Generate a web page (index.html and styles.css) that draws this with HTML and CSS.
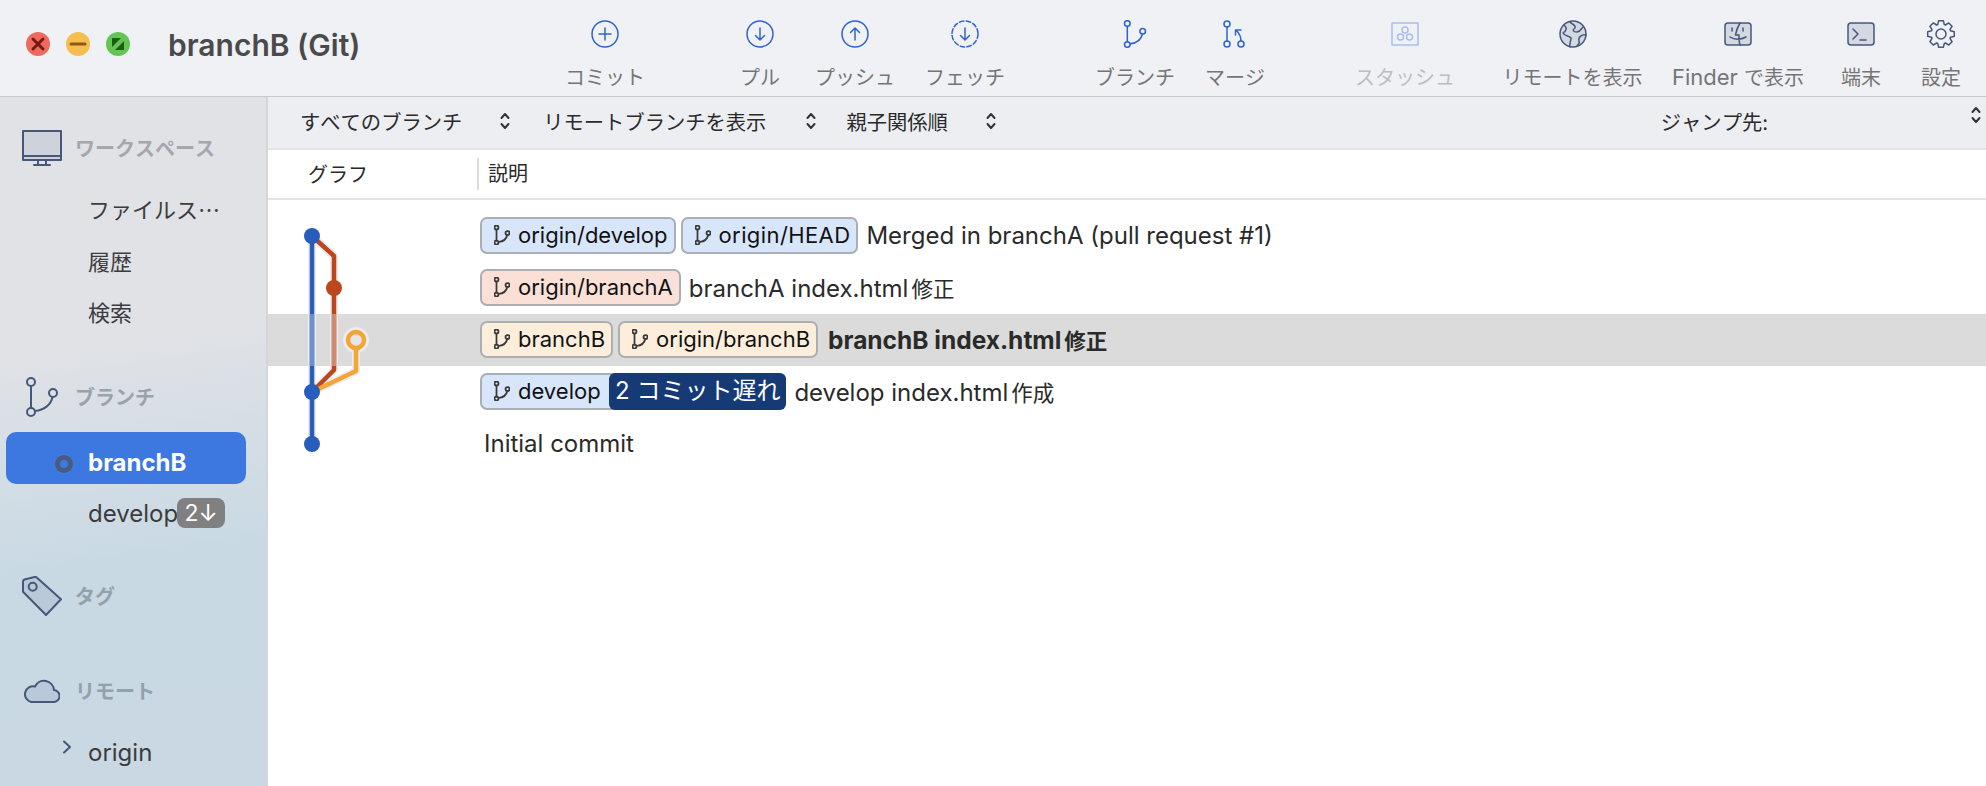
FILE: index.html
```html
<!DOCTYPE html>
<html lang="ja">
<head>
    <meta charset="UTF-8">
    <title>branchB (Git)</title>
    <link rel="stylesheet" href="styles.css">
</head>
<body>
    <svg class="defs" width="0" height="0">
        <symbol id="branch" viewBox="0 0 32 40">
            <circle cx="5" cy="5" r="4"/>
            <circle cx="5" cy="35" r="4"/>
            <circle cx="27" cy="16" r="4"/>
            <path d="M5 9V31M9 34C18 33 25 28 26.5 20"/>
        </symbol>
        <symbol id="updown" viewBox="0 0 10 18">
            <path d="M1.5 6L5 2L8.5 6M1.5 12L5 16L8.5 12"/>
        </symbol>
    </svg>

    <header class="titlebar">
        <div class="lights">
            <span class="light light-red"><svg viewBox="0 0 24 24"><path d="M7 7L17 17M17 7L7 17"/></svg></span>
            <span class="light light-yellow"><svg viewBox="0 0 24 24"><path d="M5 12H19"/></svg></span>
            <span class="light light-green"><svg viewBox="0 0 24 24"><path class="fill" d="M6 18V9L15 18ZM18 6V15L9 6Z" transform="rotate(90 12 12)"/></svg></span>
        </div>
        <h1 class="title">branchB (Git)</h1>
        <nav class="toolbar">
            <div class="tool tool-commit">
                <svg class="tool-icon" viewBox="0 0 28 28"><circle cx="14" cy="14" r="13"/><path d="M14 8V20M8 14H20"/></svg>
                <span>コミット</span>
            </div>
            <div class="tool tool-pull">
                <svg class="tool-icon" viewBox="0 0 28 28"><circle cx="14" cy="14" r="13"/><path d="M14 8V20M9.5 15.5L14 20L18.5 15.5"/></svg>
                <span>プル</span>
            </div>
            <div class="tool tool-push">
                <svg class="tool-icon" viewBox="0 0 28 28"><circle cx="14" cy="14" r="13"/><path d="M14 20V8M9.5 12.5L14 8L18.5 12.5"/></svg>
                <span>プッシュ</span>
            </div>
            <div class="tool tool-fetch">
                <svg class="tool-icon" viewBox="0 0 28 28"><circle cx="14" cy="14" r="13" stroke-dasharray="4.5 2.4"/><path d="M14 8V20M9.5 15.5L14 20L18.5 15.5"/></svg>
                <span>フェッチ</span>
            </div>
            <div class="tool tool-branch">
                <svg class="tool-icon"><use href="#branch"/></svg>
                <span>ブランチ</span>
            </div>
            <div class="tool tool-merge">
                <svg class="tool-icon" viewBox="0 0 28 28">
                    <circle cx="6" cy="4" r="3"/><circle cx="6" cy="24" r="3"/><circle cx="20" cy="24" r="3"/>
                    <path d="M6 7V21M20 21C20 17 18 13 15 10M14.500 15V10H20"/>
                </svg>
                <span>マージ</span>
            </div>
            <div class="tool tool-stash is-disabled">
                <svg class="tool-icon" viewBox="0 0 28 28">
                    <rect x="1" y="3" width="26" height="22"/>
                    <circle cx="14" cy="10" r="3"/><circle cx="9.500" cy="17" r="3"/><circle cx="18.500" cy="17" r="3"/>
                </svg>
                <span>スタッシュ</span>
            </div>
            <div class="tool tool-remote">
                <svg class="tool-icon icon-dark" viewBox="0 0 28 28">
                    <circle class="tint" cx="14" cy="14" r="13"/>
                    <path d="M5 5C9 8 7 11 4 13C6 17 10 15 12 18C12 21 10 24 11 27M11 2C13 5 17 4 16 8C13 10 14 12 18 12C22 11 22 9 24 7M27 15C23 14 19 17 20 21C21 23 19 25 18 26"/>
                </svg>
                <span>リモートを表示</span>
            </div>
            <div class="tool tool-finder">
                <svg class="tool-icon icon-dark" viewBox="0 0 28 28">
                    <rect class="tint" x="1" y="3" width="26" height="22" rx="3"/>
                    <path d="M16 3C13 8 12 12 11.500 15H15C15 18 15 22 16 25M8 8V11M19 8V11M6 17C10 20 17 20 22 17"/>
                </svg>
                <span><span class="latin">Finder </span>で表示</span>
            </div>
            <div class="tool tool-term">
                <svg class="tool-icon icon-dark" viewBox="0 0 28 28">
                    <rect class="tint" x="1" y="3" width="26" height="22" rx="3"/>
                    <path d="M6 9L11 14L6 19M13 20H19"/>
                </svg>
                <span>端末</span>
            </div>
            <div class="tool tool-settings">
                <svg class="tool-icon icon-dark" viewBox="0 0 28 28">
                    <path d="M10.74 4.54L11.66 .7H16.34L17.26 4.54L18.38 5.01L21.74 2.94L25.06 6.26L22.99 9.62L23.46 10.74L27.3 11.66V16.34L23.46 17.26L22.99 18.38L25.06 21.74L21.74 25.06L18.38 22.99L17.26 23.46L16.34 27.3H11.66L10.74 23.46L9.62 22.99L6.26 25.06L2.94 21.74L5.01 18.38L4.54 17.26L.7 16.34V11.66L4.54 10.74L5.01 9.62L2.94 6.26L6.26 2.94L9.62 5.01Z"/>
                    <circle cx="14" cy="14" r="5"/>
                </svg>
                <span>設定</span>
            </div>
        </nav>
    </header>

    <div class="content">
        <aside class="sidebar">
            <div class="side-head head-workspace">
                <svg class="side-icon icon-monitor" viewBox="0 0 40 36">
                    <rect class="tint" x="1" y="1" width="38" height="29"/>
                    <path d="M1 26H39M16 30V35M24 30V35M12 35H28"/>
                </svg>
                <span>ワークスペース</span>
            </div>
            <div class="side-item item-first"><span class="ja ja-side">ファイルス…</span></div>
            <div class="side-item item-compact"><span class="ja ja-side">履歴</span></div>
            <div class="side-item"><span class="ja ja-side">検索</span></div>

            <div class="side-head head-branch">
                <svg class="side-icon icon-branch"><use href="#branch"/></svg>
                <span>ブランチ</span>
            </div>
            <div class="side-item is-selected">
                <span class="current-ring"></span>
                <span>branchB</span>
            </div>
            <div class="side-item item-develop">
                <span>develop</span>
                <span class="count">2↓</span>
            </div>

            <div class="side-head head-tag">
                <svg class="side-icon icon-tag" viewBox="0 0 40 40">
                    <path class="tint" d="M1 15.700V5.500Q1 4 2.500 3.500L12.500 1Q14 .7 15 1.700L39 23.300L24 39Z"/>
                    <circle cx="10.700" cy="10.700" r="4"/>
                </svg>
                <span>タグ</span>
            </div>

            <div class="side-head head-remote">
                <svg class="side-icon icon-cloud" viewBox="0 0 36 24">
                    <path class="tint" d="M7 23H29A6 6 0 0 0 30 11A10 10 0 0 0 11 7.500A8 8 0 0 0 7 23Z"/>
                </svg>
                <span>リモート</span>
            </div>
            <div class="side-item item-origin">
                <svg class="disclosure" viewBox="0 0 10 14"><path d="M2 1.500L8 7L2 12.500"/></svg>
                <span>origin</span>
            </div>
        </aside>

        <main class="main">
            <div class="filterbar">
                <div class="filter filter-branches">すべてのブランチ<svg class="updown"><use href="#updown"/></svg></div>
                <div class="filter filter-remote">リモートブランチを表示<svg class="updown"><use href="#updown"/></svg></div>
                <div class="filter filter-order">親子関係順<svg class="updown"><use href="#updown"/></svg></div>
                <div class="filter filter-jump">ジャンプ先:<svg class="updown"><use href="#updown"/></svg></div>
            </div>

            <div class="columns">
                <div class="col-graph">グラフ</div>
                <div class="col-desc">説明</div>
            </div>

            <div class="rows">
                <div class="row">
                    <span class="ref ref-blue"><svg class="ref-icon"><use href="#branch"/></svg>origin/develop</span>
                    <span class="ref ref-blue ref-head"><svg class="ref-icon"><use href="#branch"/></svg>origin/HEAD</span>
                    <span class="msg">Merged in branchA (pull request #1)</span>
                </div>
                <div class="row">
                    <span class="ref ref-red"><svg class="ref-icon"><use href="#branch"/></svg>origin/branchA</span>
                    <span class="msg">branchA index.html<span class="ja ja-gap">修正</span></span>
                </div>
                <div class="row is-current">
                    <span class="ref ref-orange"><svg class="ref-icon"><use href="#branch"/></svg>branchB</span>
                    <span class="ref ref-orange"><svg class="ref-icon"><use href="#branch"/></svg>origin/branchB</span>
                    <span class="msg">branchB index.html<span class="ja ja-gap">修正</span></span>
                </div>
                <div class="row">
                    <span class="ref ref-blue ref-joined"><svg class="ref-icon"><use href="#branch"/></svg>develop</span>
                    <span class="behind">2 コミット遅れ</span>
                    <span class="msg">develop index.html<span class="ja ja-gap">作成</span></span>
                </div>
                <div class="row">
                    <span class="msg msg-plain">Initial commit</span>
                </div>

                <svg class="graph" viewBox="0 0 140 260">
                    <g class="halo">
                        <path d="M44 26V234"/>
                        <path d="M44 26L66 46V160L44 182"/>
                        <path d="M88 130V161L44 182"/>
                        <circle cx="88" cy="130" r="9"/>
                    </g>
                    <path class="line line-red" d="M44 26L66 46V160L44 182"/>
                    <path class="line line-blue" d="M44 26V234"/>
                    <path class="line line-orange" d="M88 130V161L44 182"/>
                    <path class="line line-blue-soft" d="M44 104V156"/>
                    <path class="line line-red-soft" d="M66 104V156"/>
                    <circle class="node-blue" cx="44" cy="26" r="8"/>
                    <circle class="node-red" cx="66" cy="78" r="8"/>
                    <circle class="node-ring" cx="88" cy="130" r="8"/>
                    <circle class="node-blue" cx="44" cy="182" r="8"/>
                    <circle class="node-blue" cx="44" cy="234" r="8"/>
                </svg>
            </div>
        </main>
    </div>
</body>
</html>
```

FILE: styles.css
```css
* {
    box-sizing: border-box;
}
html, body {
    height: 786px;
    margin: 0;
    overflow: hidden;
}
body {
    font-family: "Inter", "Noto Sans CJK JP", sans-serif;
    font-size: 24px;
    color: #2a2a2a;
    background: #ffffff;
}
.defs {
    display: block;
    height: 0;
}
svg {
    display: block;
    fill: none;
    stroke-linecap: round;
    stroke-linejoin: round;
}
.ja {
    font-family: "Noto Sans CJK JP", sans-serif;
    font-size: 21.500px;
    font-kerning: none;
}
.ja-gap {
    margin-left: 3px;
}
.ja-side {
    font-size: 22px;
}

/* title bar */
.titlebar {
    display: flex;
    height: 97px;
    background: #f0f1f5;
    border-bottom: 1px solid #c9c9cb;
}
.lights {
    display: flex;
    gap: 16px;
    margin: 32px 0 0 26px;
}
.light {
    width: 24px;
    height: 24px;
    border-radius: 50%;
}
.light svg {
    stroke-width: 3;
}
.light-red {
    background: #ec6a5e;
    stroke: #7a1810;
}
.light-yellow {
    background: #f4bf4f;
    stroke: #8f5a16;
}
.light-green {
    background: #62c554;
}
.light-green .fill {
    fill: #1f5c14;
}
.title {
    width: 392px;
    margin: 27px 0 0 38px;
    font-size: 30px;
    line-height: 36px;
    font-weight: 600;
    color: #4a4a4d;
}
.toolbar {
    display: flex;
}
.tool {
    display: flex;
    flex-direction: column;
    align-items: center;
    padding-top: 20px;
    font-size: 20px;
    font-kerning: none;
    line-height: 24px;
    color: #757577;
    white-space: nowrap;
}
.latin {
    font-size: 22px;
    line-height: 0;
}
.tool-icon {
    width: 28px;
    height: 28px;
    margin-bottom: 18px;
    stroke: #2f63d0;
    stroke-width: 1.500;
}
.tool-branch .tool-icon {
    stroke-width: 2.200;
}
.icon-dark {
    stroke: #46587a;
}
.icon-dark .tint {
    fill: #d3d8e2;
}
.is-disabled {
    color: #bcbdc1;
}
.is-disabled .tool-icon {
    stroke: #a9bdee;
}
.tool-commit { width: 90px; }
.tool-pull { width: 70px; margin-left: 75px; }
.tool-push { width: 80px; margin-left: 20px; }
.tool-fetch { width: 80px; margin-left: 30px; }
.tool-branch { width: 80px; margin-left: 90px; }
.tool-merge { width: 70px; margin-left: 25px; }
.tool-stash { width: 110px; margin-left: 80px; }
.tool-remote { width: 155px; margin-left: 35px; }
.tool-finder { width: 150px; margin-left: 13px; }
.tool-term { width: 52px; margin-left: 22px; }
.tool-settings { width: 52px; margin-left: 28px; }

/* sidebar */
.content {
    display: flex;
    height: 689px;
}
.sidebar {
    flex: 0 0 268px;
    padding-top: 25px;
    background: linear-gradient(172deg, #e1e2e6 0, #e0e2e6 36%, #c9d9e4 66%, #c9d8e3 100%);
    border-right: 2px solid #d6d6d6;
}
.side-head {
    display: flex;
    align-items: center;
    height: 52px;
    padding: 0 0 2px 75px;
    position: relative;
    font-size: 20px;
    font-kerning: none;
    font-weight: 700;
    color: #a4a7ac;
}
.side-icon {
    position: absolute;
    left: 22px;
    stroke: #46587a;
    stroke-width: 2;
}
.side-icon .tint {
    fill: #b9c9da;
}
.icon-monitor {
    top: 8px;
    width: 40px;
    height: 36px;
}
.icon-monitor .tint {
    fill: #ced2da;
}
.icon-branch {
    left: 26px;
    top: 6px;
    width: 32px;
    height: 40px;
}
.icon-tag {
    top: 6px;
    width: 40px;
    height: 40px;
}
.icon-cloud {
    left: 24px;
    top: 14px;
    width: 36px;
    height: 24px;
}
.side-item {
    display: flex;
    align-items: center;
    height: 52px;
    padding-left: 88px;
    color: #3c3c3e;
}
.item-first {
    margin-top: 8px;
}
.item-compact {
    height: 51px;
}
.head-branch {
    margin-top: 34px;
    color: #9aa3ab;
}
.is-selected {
    position: relative;
    width: 240px;
    margin: 9px 0 0 6px;
    padding: 9px 0 0 82px;
    border-radius: 10px;
    background: #3d77e0;
    font-weight: 700;
    color: #ffffff;
}
.current-ring {
    position: absolute;
    left: 49px;
    top: 23px;
    width: 18px;
    height: 18px;
    border: 5px solid #4a5c7e;
    border-radius: 50%;
}
.item-develop {
    margin-top: 3px;
}
.count {
    width: 48px;
    height: 30px;
    margin-left: -1px;
    border-radius: 8px;
    background: #808080;
    color: #ffffff;
    font-size: 23px;
    line-height: 30px;
    text-align: center;
}
.head-tag {
    margin-top: 31px;
    color: #93a1ac;
}
.head-remote {
    margin-top: 43px;
    color: #93a1ac;
}
.item-origin {
    position: relative;
    margin-top: 9px;
}
.disclosure {
    position: absolute;
    left: 62px;
    top: 14px;
    width: 10px;
    height: 14px;
    stroke: #46587a;
    stroke-width: 2;
}

/* main list */
.main {
    flex: 1;
    min-width: 0;
}
.filterbar {
    display: flex;
    align-items: center;
    height: 53px;
    padding: 0 0 4px 32px;
    background: #edeef2;
    border-bottom: 2px solid #e4e4e6;
    font-size: 20.300px;
    font-kerning: none;
    white-space: nowrap;
}
.filter {
    display: flex;
    align-items: center;
}
.updown {
    width: 10px;
    height: 18px;
    stroke: #333333;
    stroke-width: 2;
}
.filter-branches .updown { margin-left: 38px; }
.filter-remote { margin-left: 33px; }
.filter-remote .updown { margin-left: 40px; }
.filter-order { margin-left: 30px; }
.filter-order .updown { margin-left: 38px; }
.filter-jump { margin-left: 665px; }
.filter-jump .updown {
    margin: -12px 0 0 203px;
}
.columns {
    display: flex;
    align-items: center;
    height: 50px;
    border-bottom: 2px solid #e4e4e4;
    font-size: 20px;
    font-kerning: none;
}
.col-graph {
    width: 209px;
    padding: 0 0 2px 40px;
}
.col-desc {
    height: 32px;
    padding-left: 9px;
    border-left: 2px solid #dcdcdc;
    line-height: 32px;
}
.rows {
    position: relative;
    padding-top: 10px;
}
.row {
    display: flex;
    align-items: center;
    gap: 5px;
    height: 52px;
    padding-left: 212px;
    white-space: nowrap;
}
.is-current {
    background: #dbdbdb;
}
.is-current .msg {
    margin-left: 5px;
    font-size: 24.500px;
    font-weight: 700;
}
.ref {
    display: flex;
    align-items: center;
    height: 37px;
    margin-bottom: 2px;
    padding: 0 6px 0 12px;
    border: 2px solid #abaeb2;
    border-radius: 7px;
    color: #111111;
    font-size: 22px;
}
.ref-head {
    letter-spacing: .4px;
}
.ref-blue { background: #d8e6fb; }
.ref-red { background: #fbe0d8; }
.ref-orange { background: #fdeedb; }
.ref-joined {
    padding-right: 0;
    width: 140px;
    border-radius: 7px 0 0 7px;
    border-right: 0;
}
.ref-icon {
    width: 16px;
    height: 20px;
    margin-right: 8px;
    stroke: #3a3a3a;
    stroke-width: 3.500;
}
.behind {
    height: 37px;
    margin: 0 0 2px -16px;
    padding: 0 6px;
    border-radius: 6px;
    background: #163a75;
    color: #ffffff;
    font-size: 24px;
    font-kerning: none;
    line-height: 36px;
}
.msg {
    margin: 0 0 2px 3px;
}
.msg-plain {
    margin-left: 4px;
}
.graph {
    position: absolute;
    left: 0;
    top: 10px;
    width: 140px;
    height: 260px;
    pointer-events: none;
}
.halo {
    stroke: #ececec;
    stroke-width: 8;
}
.halo circle {
    fill: #ececec;
}
.line {
    stroke-width: 4.500;
    stroke-linecap: butt;
}
.line-blue { stroke: #295dbb; }
.line-red { stroke: #bd471c; }
.line-orange { stroke: #f3a537; }
.line-blue-soft { stroke: #6c90cd; }
.line-red-soft { stroke: #cf8a70; }
.node-blue { fill: #295dbb; }
.node-red { fill: #bd471c; }
.node-ring {
    fill: #e6e6e6;
    stroke: #f3a537;
    stroke-width: 4.500;
}
```
